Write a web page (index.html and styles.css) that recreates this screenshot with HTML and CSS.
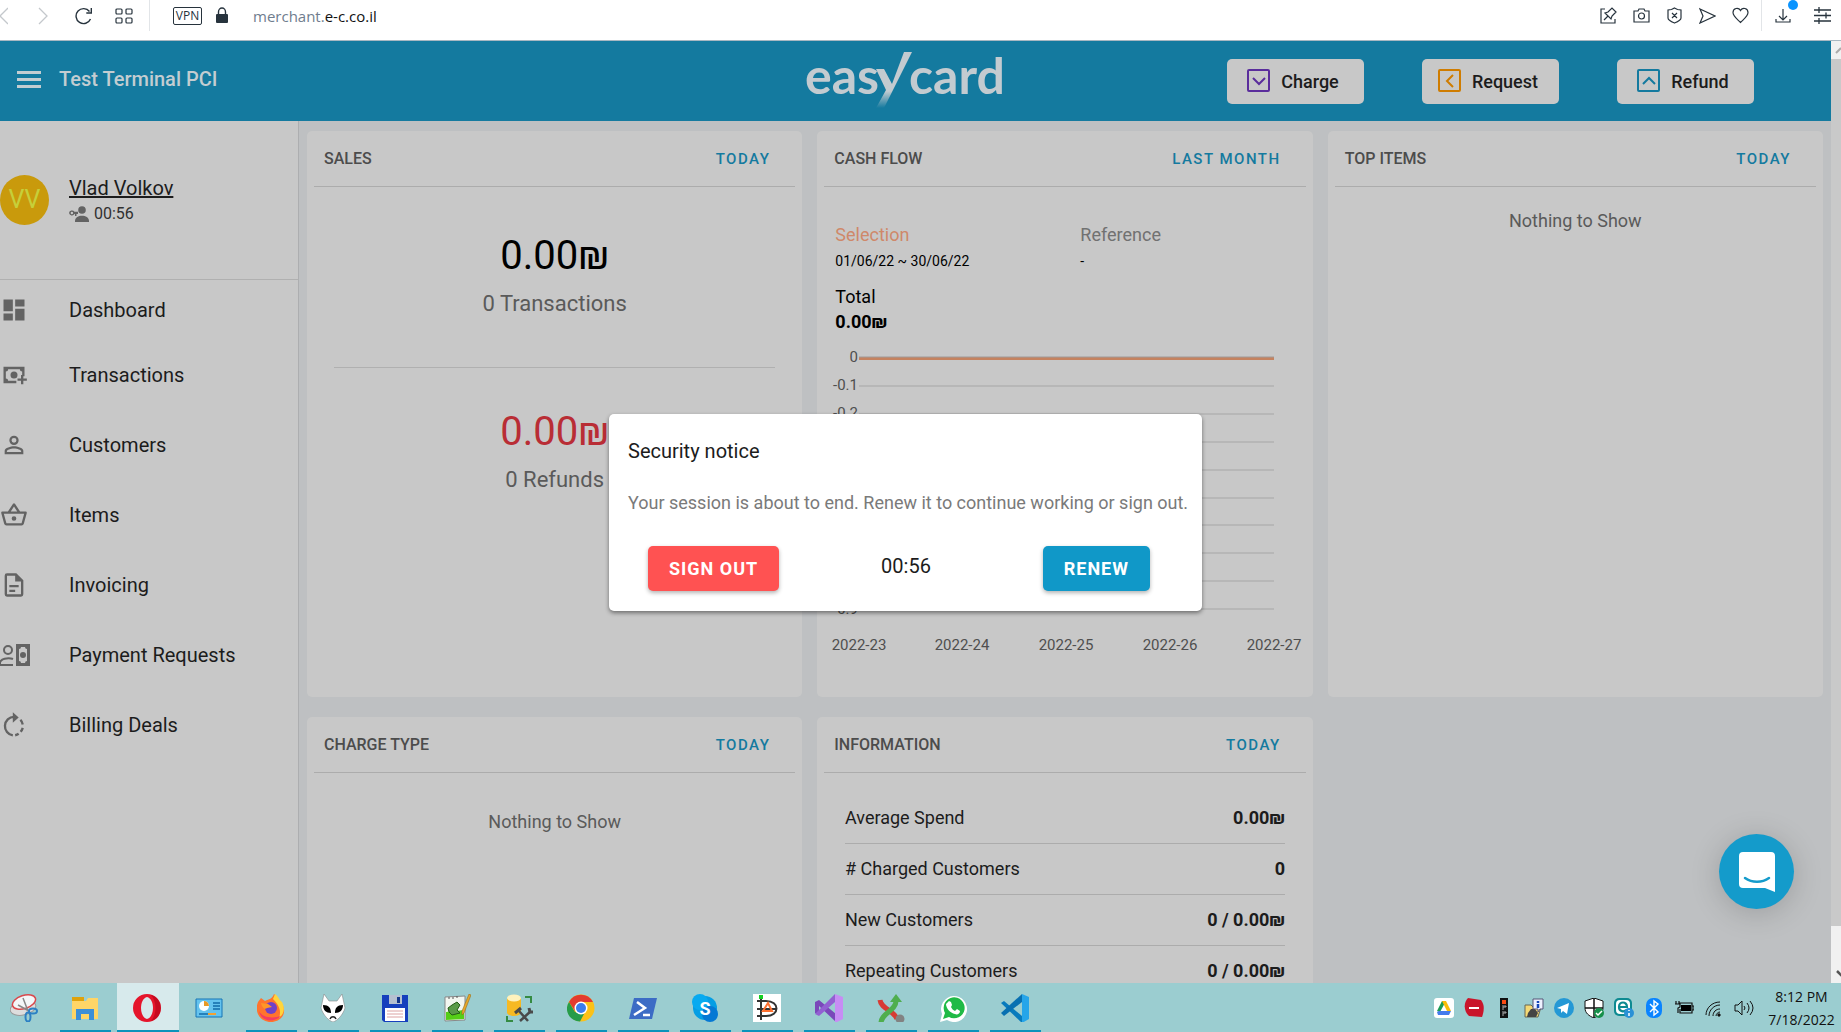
FILE: index.html
```html
<!DOCTYPE html>
<html lang="en">
<head>
<meta charset="utf-8">
<title>EasyCard merchant</title>
<link rel="stylesheet" href="styles.css">
</head>
<body>
<div class="screen">
  <div class="browser">
    <div class="browser-left">
      <svg class="ic-back" width="8" height="18" viewBox="0 0 8 18"><path d="M8 1L0 9l8 8" fill="none" stroke="#c4c8cc" stroke-width="1.3"/></svg>
      <svg class="ic-fwd" width="10" height="18" viewBox="0 0 10 18"><path d="M1 1l8 8-8 8" fill="none" stroke="#c4c8cc" stroke-width="1.3"/></svg>
      <svg class="ic-reload" width="18" height="18" viewBox="0 0 18 18" fill="none" stroke="#27333d" stroke-width="1.4"><path d="M15.500 12A7.500 7.500 0 1 1 14.500 4.500M16.300 1v5h-5"/></svg>
      <svg class="ic-grid" width="18" height="16" viewBox="0 0 18 16" fill="none" stroke="#27333d" stroke-width="1.2"><rect x="1" y="1" width="6" height="5" rx="1"/><rect x="11" y="1" width="6" height="5" rx="1"/><rect x="1" y="10" width="6" height="5" rx="1"/><rect x="11" y="10" width="6" height="5" rx="1"/></svg>
      <span class="sep"></span>
      <span class="vpn">VPN</span>
      <svg class="ic-lock" width="14" height="17" viewBox="0 0 14 17"><path d="M3.500 8V5a3.500 4 0 0 1 7 0v3" fill="none" stroke="#27333d" stroke-width="1.4"/><rect x="1" y="7" width="12" height="9" rx="1" fill="#27333d"/></svg>
      <span class="url">merchant.<b>e-c.co.il</b></span>
    </div>
    <div class="browser-right">
      <svg width="17" height="17" viewBox="0 0 17 17" fill="none" stroke="#27333d" stroke-width="1.2"><path d="M5 2H1v14h14v-4M4 13l4-4M5 6l6 6 1-3 3-3 1-1-4-4-4 4z"/></svg>
      <svg width="17" height="17" viewBox="0 0 17 17" fill="none" stroke="#27333d" stroke-width="1.2"><path d="M1 4h4l1-2h5l1 2h4v11H1z"/><circle cx="8.500" cy="9" r="3"/></svg>
      <svg width="17" height="17" viewBox="0 0 17 17" fill="none" stroke="#27333d" stroke-width="1.2"><path d="M8.500 1l3 1.500 3.500.5v8c0 2-4 4-6.500 5C6 15 2 13 2 11V3l3.500-.5zM6 6l5 5M11 6l-5 5"/></svg>
      <svg width="17" height="17" viewBox="0 0 17 17" fill="none" stroke="#27333d" stroke-width="1.2"><path d="M1 2l15 7-15 7 3-7z"/></svg>
      <svg width="17" height="17" viewBox="0 0 17 17" fill="none" stroke="#27333d" stroke-width="1.2"><path d="M8.500 15.500C5 12 1 9 1 5.500 1 1 6.500 0 8.500 3.500 10.500 0 16 1 16 5.500c0 3.500-4 6.500-7.500 10z"/></svg>
      <span class="sep"></span>
      <svg class="ic-down" width="24" height="28" viewBox="0 0 24 28"><path d="M9 9v11M5 16l4 4 4-4M2 19v3h14v-3" fill="none" stroke="#27333d" stroke-width="1.200"/><circle cx="19" cy="5" r="5" fill="#0a94ff"/></svg>
      <svg width="17" height="17" viewBox="0 0 17 17" fill="none" stroke="#27333d" stroke-width="1.3"><path d="M0 3h17M0 8.500h17M0 14h17M5 0v6M12 5.500v6M5 11v6"/></svg>
    </div>
  </div>

  <div class="page">
    <div class="app">
      <header class="topbar">
        <div class="topbar-left">
          <svg width="24" height="17" viewBox="0 0 24 17" fill="#c3cdd1"><path d="M0 0h24v3H0zM0 7h24v3H0zM0 14h24v3H0z"/></svg>
          <span class="terminal">Test Terminal PCI</span>
        </div>
        <svg class="logo" width="204" height="64" viewBox="0 0 204 64" fill="#c3cbd0" role="img" aria-label="easycard">
          <defs><linearGradient id="tail" x1="0" y1="0" x2="0" y2="1"><stop offset=".7" stop-color="#c3cbd0"/><stop offset="1" stop-color="#c3cbd0" stop-opacity="0"/></linearGradient></defs>
          <text class="logo-text" x="0" y="45">eas</text>
          <path d="M71 20h8l8 15L99 3h8L79 59h-8l10-18z" fill="url(#tail)"/>
          <text class="logo-text" x="104" y="45">card</text>
        </svg>
        <div class="actions">
          <button class="action charge"><svg width="24" height="24" viewBox="0 0 24 24" fill="none" stroke="#5a2d9c" stroke-width="2"><rect x="1" y="1" width="21" height="21" rx="1"/><path d="M6 9l6 6 6-6"/></svg>Charge</button>
          <button class="action request"><svg width="24" height="24" viewBox="0 0 24 24" fill="none" stroke="#cf7c00" stroke-width="2"><rect x="1" y="1" width="21" height="21" rx="1"/><path d="M15 6l-6 6 6 6"/></svg>Request</button>
          <button class="action refund"><svg width="24" height="24" viewBox="0 0 24 24" fill="none" stroke="#147a9f" stroke-width="2"><rect x="1" y="1" width="21" height="21" rx="1"/><path d="M6 15l6-6 6 6"/></svg>Refund</button>
        </div>
      </header>
      <div class="body">
        <nav class="sidebar">
          <div class="user">
            <span class="avatar">VV</span>
            <div class="user-info">
              <a class="user-name" href="#">Vlad Volkov</a>
              <span class="session"><svg width="20" height="16" viewBox="0 0 20 16" fill="#636363"><circle cx="13" cy="4" r="3.800"/><path d="M6 15c0-7 14-7 14 0v1H6z"/><path d="M0 7a3 3 0 0 1 5.500-1.200H9V8H7.500v2H6V8H5.500A3 3 0 0 1 0 7zm1.700 0a1.200 1.200 0 1 0 2.400 0 1.200 1.200 0 0 0-2.400 0z"/></svg>00:56</span>
            </div>
          </div>
          <ul class="menu">
            <li><a href="#"><svg viewBox="0 0 24 24"><path d="M13 3v6h8V3m-8 18h8V11h-8M3 21h8v-6H3m0-2h8V3H3v10z"/></svg>Dashboard</a></li>
            <li><a href="#"><svg viewBox="0 0 24 24"><path d="M3 5h18v8h-2V9a2 2 0 0 1-2-2H7a2 2 0 0 1-2 2v6a2 2 0 0 1 2 2h7v2H3zM12 9a3 3 0 1 1 0 6 3 3 0 0 1 0-6zM18 12h2v3h3v2h-3v3h-2v-3h-3v-2h3z"/></svg>Transactions</a></li>
            <li><a href="#"><svg viewBox="0 0 24 24"><path d="M12 4a4 4 0 1 1 0 8 4 4 0 0 1 0-8m0 1.900a2.100 2.100 0 1 0 0 4.200 2.100 2.100 0 0 0 0-4.200M12 13c2.670 0 8 1.330 8 4v3H4v-3c0-2.670 5.330-4 8-4m0 1.900c-2.970 0-6.100 1.460-6.100 2.100v1.100h12.200V17c0-.640-3.130-2.100-6.100-2.100z"/></svg>Customers</a></li>
            <li><a href="#"><svg viewBox="0 0 24 24"><path d="M22 9h-4.790l-4.380-6.560a1 1 0 0 0-1.660 0L6.790 9H2a1 1 0 0 0-1 1l.04.270 2.540 9.270A2 2 0 0 0 5.500 21h13a2 2 0 0 0 1.930-1.460l2.540-9.270L23 10a1 1 0 0 0-1-1M12 4.800 14.800 9H9.200L12 4.800M18.500 19h-13l-2.200-8h17.400l-2.200 8M12 13a2 2 0 1 0 0 4 2 2 0 0 0 0-4z"/></svg>Items</a></li>
            <li><a href="#"><svg viewBox="0 0 24 24"><path d="M6 2a2 2 0 0 0-2 2v16a2 2 0 0 0 2 2h12a2 2 0 0 0 2-2V8l-6-6H6m0 2h7v5h5v11H6V4m2 8v2h8v-2H8m0 4v2h5v-2H8z"/></svg>Invoicing</a></li>
            <li><a href="#"><svg class="wide" viewBox="0 0 30 24"><path fill-rule="evenodd" d="M16 1h14v22H16zM21 4a2 2 0 0 1-2 2v12a2 2 0 0 1 2 2h4a2 2 0 0 1 2-2V6a2 2 0 0 1-2-2zM23 9a3 3 0 1 1 0 6 3 3 0 0 1 0-6z"/><circle cx="8" cy="7" r="4" fill="none" stroke="#636363" stroke-width="2"/><path d="M13 16c-5-2-13 0-13 4v2h13" fill="none" stroke="#636363" stroke-width="2"/></svg>Payment Requests</a></li>
            <li><a href="#"><svg viewBox="0 0 24 24"><path d="M11 20.900A8 8 0 0 1 12 5" fill="none" stroke="#636363" stroke-width="2"/><path d="M11 1l5 4.500-5 4.500z"/><path d="M17.500 7.500a8 8 0 0 1 2 4M19.500 14.500a8 8 0 0 1-1.800 3.300M16 19.500a8 8 0 0 1-3 1.300" fill="none" stroke="#636363" stroke-width="2"/></svg>Billing Deals</a></li>
          </ul>
        </nav>
        <main class="grid">
          <section class="card">
            <div class="card-head"><h2>SALES</h2><button class="period">TODAY</button></div>
            <div class="sales">
              <div class="sum">0.00₪</div>
              <div class="count">0 Transactions</div>
              <hr>
              <div class="sum red">0.00₪</div>
              <div class="count">0 Refunds</div>
            </div>
          </section>
          <section class="card">
            <div class="card-head"><h2>CASH FLOW</h2><button class="period">LAST MONTH</button></div>
            <div class="cash">
              <div class="ranges">
                <div><div class="range-name sel">Selection</div><div class="range-date">01/06/22 ~ 30/06/22</div></div>
                <div><div class="range-name">Reference</div><div class="range-date">-</div></div>
              </div>
              <div class="total">Total</div>
              <div class="total-sum">0.00₪</div>
              <svg class="chart" viewBox="0 0 477 320" width="477" height="320">
                <g stroke="#b7b7b7" stroke-width="2"><path d="M32 46h415M32 74h415M32 102h415M32 130h415M32 158h415M32 185h415M32 213h415M32 241h415M32 269h415"/></g>
                <path d="M32 18.500h415" stroke="#c5825f" stroke-width="3"/><path d="M32 17h415" stroke="#a09a98"/>
                <g class="tick-y"><text x="31" y="22">0</text><text x="31" y="50">-0.1</text><text x="31" y="78">-0.2</text><text x="31" y="106">-0.3</text><text x="31" y="134">-0.4</text><text x="31" y="162">-0.5</text><text x="31" y="190">-0.6</text><text x="31" y="218">-0.7</text><text x="31" y="246">-0.8</text><text x="31" y="274">-0.9</text></g>
                <g class="tick-x"><text x="32" y="310">2022-23</text><text x="135" y="310">2022-24</text><text x="239" y="310">2022-25</text><text x="343" y="310">2022-26</text><text x="447" y="310">2022-27</text></g>
              </svg>
            </div>
          </section>
          <section class="card">
            <div class="card-head"><h2>TOP ITEMS</h2><button class="period">TODAY</button></div>
            <p class="empty">Nothing to Show</p>
          </section>
          <section class="card">
            <div class="card-head"><h2>CHARGE TYPE</h2><button class="period">TODAY</button></div>
            <p class="empty low">Nothing to Show</p>
          </section>
          <section class="card">
            <div class="card-head"><h2>INFORMATION</h2><button class="period">TODAY</button></div>
            <table class="info">
              <tr><th>Average Spend</th><td>0.00₪</td></tr>
              <tr><th># Charged Customers</th><td>0</td></tr>
              <tr><th>New Customers</th><td>0 / 0.00₪</td></tr>
              <tr><th>Repeating Customers</th><td>0 / 0.00₪</td></tr>
            </table>
          </section>
        </main>
      </div>
    </div>
    <div class="scrollbar">
      <div class="scroll-up"><svg width="10" height="18" viewBox="0 0 10 18"><path d="M5 12l5-5" stroke="#aaa" stroke-width="2"/></svg></div>
      <div class="thumb"></div>
      <div class="scroll-down"><svg width="10" height="18" viewBox="0 0 10 18"><path d="M6 6l5 5" stroke="#555" stroke-width="2.500"/></svg></div>
    </div>

    <div class="modal-layer">
      <div class="modal" role="dialog" aria-labelledby="notice">
        <h1 id="notice">Security notice</h1>
        <p>Your session is about to end. Renew it to continue working or sign out.</p>
        <div class="modal-actions">
          <button class="btn danger">SIGN OUT</button>
          <span class="timer">00:56</span>
          <button class="btn primary">RENEW</button>
        </div>
      </div>
    </div>
    <button class="chat" aria-label="Open chat"><svg width="36" height="40" viewBox="0 0 36 40"><path d="M4 0h28a4 4 0 0 1 4 4v36l-10-4H4a4 4 0 0 1-4-4V4a4 4 0 0 1 4-4z" fill="#fff"/><path d="M6 26c7 5 17 5 24 0" fill="none" stroke="#149bcb" stroke-width="2.500" stroke-linecap="round"/></svg></button>
  </div>

  <footer class="taskbar">
    <div class="tasks">
      <button class="task idle" aria-label="Snipping Tool"><svg viewBox="0 0 28 28"><ellipse cx="13" cy="14" rx="13" ry="7" fill="#ddd" stroke="#999" transform="rotate(-12 13 14)"/><ellipse cx="14" cy="8" rx="12" ry="6.500" fill="#f4f6f8" stroke="#d9484c" stroke-width="1.500" transform="rotate(-18 14 8)"/><path d="M13 4l5 13M8 11l11 6" stroke="#888" stroke-width="1.500"/><g fill="none" stroke="#2c80c4" stroke-width="2"><ellipse cx="23" cy="17" rx="4" ry="2.500"/><ellipse cx="18" cy="23" rx="2.500" ry="4.500"/></g></svg></button>
      <button class="task" aria-label="File Explorer"><svg viewBox="0 0 28 28"><path d="M1 3h12v5H1z" fill="#dfa20c"/><path d="M1 7h14l2-3h10v21H1z" fill="#ffd567"/><path d="M5 26V15h18v11h-5v-6h-8v6z" fill="#3c8fd8"/></svg></button>
      <button class="task active" aria-label="Opera"><svg viewBox="0 0 28 28"><path d="M14 0a14 14 0 1 1 0 28 14 14 0 0 1 0-28m0 3C6 5 6 23 14 25c8-2 8-20 0-22z" fill="#e5152b" fill-rule="evenodd"/><path d="M18 1c13 3 13 23 0 26 6-7 6-19 0-26z" fill="#a70014" opacity=".5"/></svg></button>
      <button class="task idle" aria-label="Control Panel"><svg viewBox="0 0 28 28"><path d="M1 5h26v18H1z" fill="#65c3ee" stroke="#1774b5"/><circle cx="9" cy="12" r="5" fill="#fff"/><path d="M9 12V7a5 5 0 0 1 5 5z" fill="#e89a26"/><path d="M18 9h7M18 12h7M18 15h7M4 20h12" stroke="#126ca9" stroke-width="1.500"/><path d="M13 20h8" stroke="#f3a132" stroke-width="2"/></svg></button>
      <button class="task" aria-label="Firefox"><svg viewBox="0 0 28 28"><path d="M1 8l3-4 4 3c4-2 7-2 9-7 4 3 4 6 7 8 8 12-1 20-10 20C3 28-3 18 1 8z" fill="#ff742d"/><path d="M16 5l2-5c4 3 4 6 7 8 4 8 1 13-3 16 3-8-1-14-6-19z" fill="#ffd53c"/><path d="M2 17c2 11 15 12 22 5-6 2-18 3-22-5z" fill="#f43c62"/><circle cx="14" cy="14" r="6" fill="#7142c6"/><path d="M4 9l7 1 4 3-5 1c-2 2-5 0-6-5z" fill="#ff9627"/></svg></button>
      <button class="task" aria-label="Foobar2000"><svg viewBox="0 0 28 28"><path d="M5 0l5 7h8l5-7 3 14c-2 7-8 13-12 14C10 27 4 21 2 14z" fill="#fff" stroke="#888" stroke-width=".6"/><path d="M4 11c6 0 8 3 8 8-5 0-8-3-8-8zM24 11c-6 0-8 3-8 8 5 0 8-3 8-8z"/><path d="M11 25c1-3 5-3 6 0" fill="none" stroke="#222" stroke-width="1.500"/></svg></button>
      <button class="task" aria-label="Total Commander"><svg viewBox="0 0 28 28"><path d="M1 1h26v27H3l-2-2z" fill="#1640bd"/><path d="M8 1h13v9H8z" fill="#b5c0d0"/><path d="M16 3h3v6h-3z" fill="#14368b"/><path d="M4 14h20v13H4z" fill="#fff"/><path d="M6 17h16M6 20h16M6 23h16" stroke="#dba2a2"/></svg></button>
      <button class="task" aria-label="Notepad++"><svg viewBox="0 0 28 28"><path d="M2 3l20-1v24L2 27z" fill="#f3f6f0" stroke="#888"/><path d="M3 18l18-2v9L3 26z" fill="#55ce17"/><path d="M5 14l4-3 5-3 3 3-3 5 3 3-8 2-3-3z" fill="#5a9a48" stroke="#245c15"/><path d="M6 3v2M10 3v2M14 2v2" stroke="#555"/><path d="M26 0l2 1-7 18-2 2v-4z" fill="#e7a72b" stroke="#8b6015" stroke-width=".5"/></svg></button>
      <button class="task" aria-label="SQL Server Management Studio"><svg viewBox="0 0 28 28"><path d="M2 4v15c2 4 12 4 14 0V4z" fill="#f6b923"/><ellipse cx="9" cy="4" rx="7" ry="3.500" fill="#fff2bd"/><path d="M20 3h6v6M2 22v5h6" fill="none" stroke="#358b42" stroke-width="2"/><path d="M15 27l11-10M14 17l9 10" stroke="#4a4a4a" stroke-width="2.500"/><path d="M10 19l6-5M24 14l1 4 3 0" fill="none" stroke="#4a4a4a" stroke-width="3"/></svg></button>
      <button class="task" aria-label="Chrome"><svg viewBox="0 0 28 28"><circle cx="14" cy="14" r="13.500" fill="#fbc116"/><path d="M2 8a13.500 13.500 0 0 1 24 0H14l-6 9z" fill="#e33b2e"/><path d="M2 8l6 10 9 2-4 7.500C1 27-3 15 2 8z" fill="#269c49"/><circle cx="14" cy="14" r="6.500" fill="#fff"/><circle cx="14" cy="14" r="5" fill="#3b7ded"/></svg></button>
      <button class="task" aria-label="PowerShell"><svg viewBox="0 0 28 28"><path d="M5 4h23l-5 21H0z" fill="#3c6cc5"/><path d="M8 8l8 6-11 7M14 21h7" fill="none" stroke="#fff" stroke-width="2.500"/></svg></button>
      <button class="task" aria-label="Skype"><svg viewBox="0 0 28 28"><circle cx="14" cy="14" r="12" fill="#059ee4"/><circle cx="9" cy="8" r="8" fill="#08aaf0"/><circle cx="19" cy="20" r="8" fill="#0678d4"/><text class="skype" x="14" y="21">S</text></svg></button>
      <button class="task" aria-label="Dia"><svg viewBox="0 0 28 28"><path d="M0 0h28v28H0z" fill="#fff"/><path d="M8 1v25M4 7h9c14 0 14 15 0 15H4M4 15h20" fill="none" stroke="#333" stroke-width="2"/><path d="M10 17l5-8 4 8z" fill="none" stroke="#ff7130" stroke-width="2"/><path d="M6 1h4v4H6z" fill="#14cf24"/></svg></button>
      <button class="task" aria-label="Visual Studio"><svg viewBox="0 0 28 28"><path d="M0 8l4-2 17 14v8L4 12v9l-4-2z" fill="#7a48ba"/><path d="M0 20l20-20v8L4 22z" fill="#9260d2"/><path d="M20 0l8 3v22l-8 4z" fill="#c78cf4"/></svg></button>
      <button class="task" aria-label="Merge tool"><svg viewBox="0 0 28 28"><path d="M3 6c1 9 14 10 17 19" fill="none" stroke="#d73b34" stroke-width="5"/><path d="M4 29c0-10 15-12 15-22" fill="none" stroke="#4fae4e" stroke-width="5"/><path d="M13 8l6-8 6 8z" fill="#4fae4e"/><circle cx="23" cy="25" r="4.500" fill="#828282"/></svg></button>
      <button class="task" aria-label="WhatsApp"><svg viewBox="0 0 28 28"><path d="M1 28l2-8A13 13 0 1 1 8 26z" fill="#fff"/><path d="M4 25l2-6a10.500 10.500 0 1 1 4 4z" fill="#20ba46"/><path d="M10 7l2 1 1 3-1 2c1 2 2 3 4 4l2-2 3 2c0 3-3 4-5 3-5-1-9-6-9-10z" fill="#fff"/></svg></button>
      <button class="task" aria-label="Visual Studio Code"><svg viewBox="0 0 28 28"><path d="M0 9l3-2 18 15v7z" fill="#087bbd"/><path d="M0 19l21-19v8L3 22z" fill="#0870b1"/><path d="M21 0l7 3v22l-7 4z" fill="#26a5e9"/></svg></button>
    </div>
    <div class="tray">
      <svg viewBox="0 0 20 20"><rect width="20" height="20" rx="3" fill="#fff"/><path d="M8 3h4l-6 11-3-1z" fill="#1c9a53"/><path d="M8 3h4l5 10h-4z" fill="#fbbd07"/><path d="M5 13h12l-2 4H4l-1-3z" fill="#437bec"/></svg>
      <svg viewBox="0 0 20 20"><path d="M4 0l13 2c4 5 3 11 1 17L5 18C0 14-1 5 4 0z" fill="#c9152b"/><path d="M5 10h10" stroke="#fff" stroke-width="2"/></svg>
      <svg viewBox="0 0 20 20"><path d="M6 0h8v20H6z" fill="#111"/><path d="M8 2h4v4H8z" fill="#fa4a12"/><path d="M8 8h4v1H9v3M8 14h4v1H9v3" fill="none" stroke="#aaa"/></svg>
      <svg viewBox="0 0 20 20"><path d="M1 7h6l2 2h8l-3 10H1z" fill="#f4d975" stroke="#665" stroke-width="1"/><path d="M4 15l3-4h4l3 4-2 4H3z" fill="#444"/><path d="M9 1h10v10h-3l-2 3v-3H9z" fill="#eef2ff" stroke="#557"/><path d="M14 3v2M14 6v4" stroke="#1747b8" stroke-width="2.500"/></svg>
      <svg viewBox="0 0 20 20"><circle cx="10" cy="10" r="10" fill="#2498d5"/><path d="M3 10l12-5-2 11-4-3-2 2v-4z" fill="#fff"/></svg>
      <svg viewBox="0 0 20 20"><path d="M10 0l9 3v7c0 5-5 8-9 10C5 18 1 15 1 10V3z" fill="#fff" stroke="#111"/><path d="M10 0v20M1 10h18" stroke="#111" stroke-width="1.500"/><circle cx="15" cy="15" r="5" fill="#16904a"/><path d="M12 15l2 2 4-4" fill="none" stroke="#fff" stroke-width="1.500"/></svg>
      <svg viewBox="0 0 20 20"><rect width="18" height="18" rx="5" fill="#0e8a91"/><rect x="2" y="2" width="14" height="14" rx="4" fill="#fff"/><path d="M5 9h8c0-6-8-6-8 0 0 5 5 5 8 3" fill="none" stroke="#0e8a91" stroke-width="2.200"/><circle cx="15" cy="15" r="5" fill="#2a91d6"/><path d="M15 12v1M15 15v3" stroke="#fff" stroke-width="1.500"/></svg>
      <svg viewBox="0 0 20 20"><rect x="2" width="16" height="20" rx="7" fill="#0a84ff"/><path d="M6 6l8 8-4 3V3l4 3-8 8" fill="none" stroke="#fff" stroke-width="1.400"/></svg>
      <svg viewBox="0 0 20 20"><path d="M5 5h13v10H6v-4M18 8h2v4h-2M2 3v3M5 3v3M1 6h5v3l-2 1v5" fill="none" stroke="#111" stroke-width="1.200"/><path d="M7 7h10v6H7z"/></svg>
      <svg viewBox="0 0 20 20" fill="none" stroke="#111"><path d="M2 17C2 10 8 4 16 4M5 18c0-6 5-11 11-11M9 18c0-4 3-7 7-7M12 18c0-2 2-4 4-4"/><circle cx="15" cy="17" r="1.200" fill="#111"/></svg>
      <svg viewBox="0 0 20 20" fill="none" stroke="#111"><path d="M1 7h3l4-4v14l-4-4H1zM10 8q2 2 0 4M13 5q4 5 0 10M16 3q6 7 0 14"/></svg>
      <div class="clock"><span>8:12 PM</span><span>7/18/2022</span></div>
    </div>
  </footer>
</div>
</body>
</html>
```
FILE: styles.css
```css
* { box-sizing: border-box; }
body { margin: 0; font-family: Roboto, "Liberation Sans", sans-serif; color: #1c1c1c; }
button { font-family: inherit; border: 0; padding: 0; cursor: pointer; }
a { color: inherit; text-decoration: none; }
svg { display: block; flex: none; }
.screen { height: 100vh; display: flex; flex-direction: column; overflow: hidden; }

/* Browser toolbar */
.browser { height: 41px; flex: none; display: flex; justify-content: space-between; background: #fff; border-bottom: 1px solid #a9b8c2; padding-bottom: 9px; }
.browser-left, .browser-right { display: flex; align-items: center; }
.ic-fwd { margin-left: 30px; }
.ic-reload { margin-left: 27px; }
.ic-grid { margin-left: 22px; }
.sep { width: 1px; align-self: stretch; background: #e2e5e8; }
.browser-left .sep { margin-left: 16px; }
.vpn { margin-left: 23px; width: 29px; height: 18px; border: 1px solid #27333d; border-radius: 2px; font: 12px/16px "Open Sans", sans-serif; text-align: center; color: #27333d; }
.ic-lock { margin-left: 13px; }
.url { margin-left: 24px; font: 15px/20px "Open Sans", sans-serif; color: #6f7d8e; }
.url b { font-weight: 400; color: #111; }
.browser-right { gap: 16px; }
.browser-right .sep { margin: 0 -4px; }
.ic-down { align-self: flex-start; margin: 0; }
.browser-right svg:last-child { margin-right: 10px; }

/* Page */
.page { flex: 1; min-height: 0; display: flex; position: relative; overflow: hidden; }
.app { flex: 1; min-width: 0; display: flex; flex-direction: column; background: #bec0c2; }
.topbar { height: 80px; flex: none; display: grid; grid-template-columns: 1fr auto 1fr; align-items: center; background: #147a9f; padding: 0 77px 0 17px; }
.topbar-left { display: flex; align-items: center; gap: 18px; padding-bottom: 4px; }
.terminal { font-size: 20px; font-weight: 500; color: #c3cdd1; }
.logo { margin-left: 42px; overflow: visible; }
.logo-text { font: bold 50px Lato, sans-serif; }
.actions { display: flex; justify-content: flex-end; gap: 58px; }
.action { width: 137px; height: 45px; display: flex; align-items: center; justify-content: center; gap: 10px; padding-right: 5px; border-radius: 5px; background: #c8c8c8; color: #1c1c1c; font-size: 18px; font-weight: 500; }
.body { flex: 1; min-height: 0; display: flex; }

.sidebar { width: 299px; flex: none; background: #c8c8c8; border-right: 1px solid #adaeb0; }
.user { height: 159px; display: flex; gap: 20px; padding-top: 54px; border-bottom: 1px solid #b0b0b0; }
.avatar { width: 49px; height: 50px; border-radius: 50%; background: #c99a0c; color: #c6cf3a; font-size: 25px; line-height: 50px; text-align: center; }
.user-info { display: flex; flex-direction: column; gap: 3px; }
.user-name { font-size: 20px; line-height: 26px; text-decoration: underline; }
.session { display: flex; align-items: center; gap: 5px; font-size: 16px; line-height: 20px; color: #303030; }
.menu { list-style: none; margin: 0; padding: 0; }
.menu a { display: flex; align-items: center; height: 70px; font-size: 20px; }
.menu li:first-child a { height: 60px; }
.menu svg { width: 28px; height: 28px; margin-right: 41px; fill: #636363; }
.menu .wide { width: 30px; height: 24px; margin-right: 39px; }

.grid { flex: 1; min-width: 0; display: grid; grid-template-columns: repeat(3, 1fr); grid-template-rows: 566px 566px; gap: 20px 15px; padding: 10px 8px 0; }
.card { min-width: 0; background: #c8c8c8; border-radius: 5px; padding: 0 7px; }
.card-head { height: 56px; display: flex; justify-content: space-between; align-items: center; padding: 0 25px 0 10px; border-bottom: 1px solid #acacac; }
.card-head h2 { margin: 0; font-size: 16px; font-weight: 500; color: #4c4c4c; }
.period { background: none; color: #147a9f; font-size: 15px; font-weight: 500; letter-spacing: 1.5px; }
.sales { padding: 45px 20px 0; text-align: center; }
.sum { font-size: 40px; line-height: 48px; color: #000; }
.sum.red { color: #b92d35; }
.count { margin-top: 9px; font-size: 22px; line-height: 30px; color: #5a5a5a; }
.sales hr { border: 0; border-top: 1px solid #b0b0b0; margin: 48px 0 40px; }
.cash { padding: 36px 11px 0; color: #000; }
.ranges { display: grid; grid-template-columns: 245px 1fr; }
.range-name { font-size: 18px; line-height: 24px; color: #717171; }
.range-name.sel { color: #cf886a; }
.range-date { font-size: 14px; line-height: 28px; }
.total { margin-top: 9px; font-size: 18px; line-height: 25px; }
.total-sum { font-size: 18px; line-height: 25px; font-weight: 700; }
.chart { margin: 6px 0 0 -8px; }
.chart text { font-size: 15px; fill: #4f4f4f; }
.tick-y { text-anchor: end; }
.tick-x { text-anchor: middle; }
.empty { margin: 22px 0 0; text-align: center; font-size: 18px; line-height: 24px; color: #5a5a5a; }
.empty.low { margin-top: 37px; }
.info { width: 440px; margin: 19px auto 0; border-collapse: collapse; font-size: 18px; color: #1c1c1c; }
.info th, .info td { height: 51px; padding: 0; border-bottom: 1px solid #acacac; }
.info th { text-align: left; font-weight: 400; }
.info td { text-align: right; font-weight: 700; }

.scrollbar { width: 10px; flex: none; display: flex; flex-direction: column; background: #f1f1f1; }
.thumb { flex: 1; background: #c9c9c9; }
.scroll-down { height: 57px; padding-top: 39px; }

/* Session dialog */
.modal-layer { position: absolute; inset: 0; display: flex; align-items: center; justify-content: center; padding: 0 30px 0 0; }
.modal { width: 593px; padding: 24px 12px 20px 19px; border-radius: 5px; background: #fff; box-shadow: 0 2px 4px rgba(0,0,0,.45); }
.modal h1 { margin: 0; font-size: 20px; line-height: 26px; font-weight: 400; }
.modal p { margin: 26px 0 30px; font-size: 18px; line-height: 26px; color: #7a7a7a; white-space: nowrap; }
.modal-actions { display: grid; grid-template-columns: 1fr auto 1fr; align-items: center; padding: 0 40px 0 20px; }
.btn { height: 45px; padding: 0 21px; border-radius: 5px; color: #fff; font-size: 18px; font-weight: 700; letter-spacing: 1px; box-shadow: 0 2px 4px rgba(0,0,0,.3); }
.danger { justify-self: start; background: #ff5252; }
.primary { justify-self: end; background: #1098c8; }
.timer { padding: 0 0 4px 14px; font-size: 20px; }
.chat { position: absolute; right: 47px; bottom: 74px; width: 75px; height: 75px; border-radius: 50%; background: #149bcb; display: flex; align-items: center; justify-content: center; box-shadow: 0 4px 30px rgba(0,0,0,.18); }

/* Taskbar */
.taskbar { height: 49px; flex: none; display: flex; justify-content: space-between; background: #9bcdd0; }
.tasks { display: flex; }
.task { width: 62px; background: none; display: flex; justify-content: center; align-items: center; padding-right: 2px; border: solid transparent; border-width: 0 6px 0 5px; }
.task:not(.idle) { background: linear-gradient(#0b93bb, #0b93bb) bottom / 100% 2px no-repeat padding-box; }
.task:first-child { width: 55px; border-left-width: 0; }
.task svg { width: 28px; height: 28px; }
.task.active { background-color: #d7eaec; border-width: 0; }
.skype { font: bold 18px Roboto, sans-serif; fill: #fff; text-anchor: middle; }
.tray { display: flex; align-items: center; gap: 10px; }
.tray svg { width: 20px; height: 20px; }
.clock { width: 77px; display: flex; flex-direction: column; align-items: center; padding-right: 2px; font: 14px/23px "Open Sans", sans-serif; color: #111; white-space: nowrap; }
```
